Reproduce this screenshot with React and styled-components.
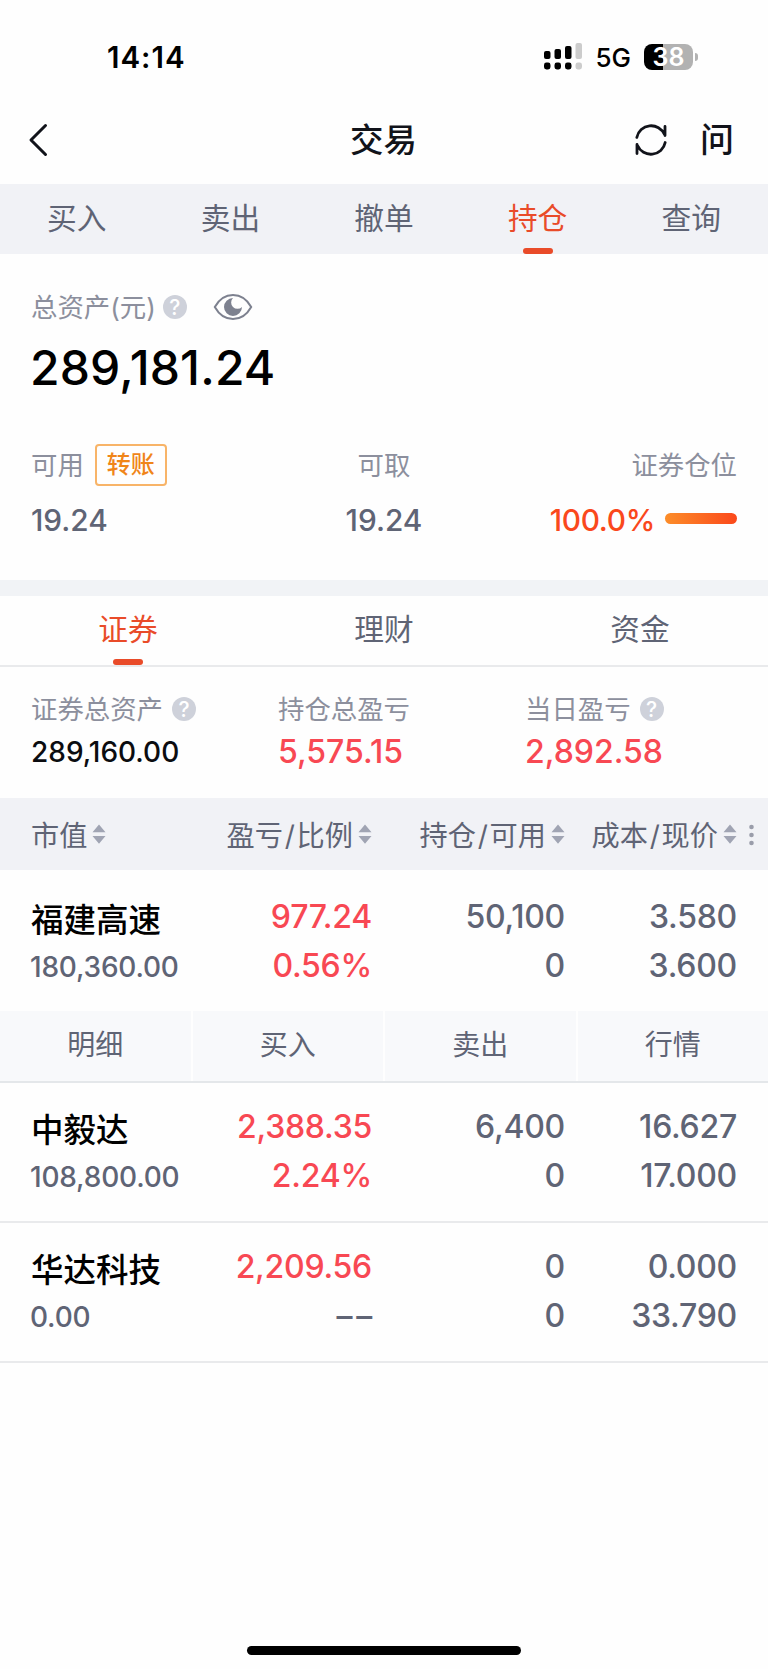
import React from "react";
import styled, { createGlobalStyle, css } from "styled-components";

const GlobalStyle = createGlobalStyle`
  * { box-sizing: border-box; }
  html, body { margin: 0; padding: 0; background: #fefefe; }
  body {
    font-family: Inter, "Noto Sans CJK SC", sans-serif;
    color: #5f6475;
    -webkit-font-smoothing: antialiased;
  }
`;

const Screen = styled.main`
  display: flex;
  flex-direction: column;
  width: 768px;
  height: 1669px;
  overflow: hidden;
  background: #fefefe;
`;

const StatusBar = styled.header`
  display: flex;
  justify-content: space-between;
  height: 95px;
  padding: 40px 70px 0 107px;
`;

const Clock = styled.span`
  height: 35px;
  font-size: 29.5px;
  font-weight: 600;
  line-height: 35px;
  letter-spacing: 1px;
  color: #000;
`;

const StatusIcons = styled.div`
  display: flex;
  align-items: center;
  height: 33px;
`;

const Network = styled.span`
  margin: 2px 13px 0 12px;
  font-size: 26px;
  font-weight: 450;
  line-height: 32px;
  color: #000;
`;

const Battery = styled.div`
  width: 49px;
  height: 26px;
  border-radius: 8px;
  background: linear-gradient(90deg, #000 0 19px, #b2b2b2 19px);
  color: #fff;
  font-size: 25px;
  font-weight: 600;
  line-height: 27px;
  text-align: center;
`;

const BatteryCap = styled.i`
  width: 3px;
  height: 8px;
  margin-left: 2px;
  border-radius: 0 3px 3px 0;
  background: #b2b2b2;
`;

const NavBar = styled.nav`
  display: grid;
  grid-template-columns: 1fr auto 1fr;
  align-items: center;
  height: 89px;
  padding: 0 34px 0 28px;
`;

const Title = styled.h1`
  margin: 0;
  padding-left: 5px;
  font-size: 33.5px;
  font-weight: 500;
  line-height: 40px;
  color: #11131a;
`;

const NavActions = styled.div`
  display: flex;
  align-items: center;
  justify-content: flex-end;
  gap: 33px;
`;

const AskButton = styled.span`
  font-size: 34px;
  font-weight: 500;
  line-height: 40px;
  color: #11131a;
`;

const TabBar = styled.div`
  display: grid;
  grid-template-columns: repeat(${(p) => p.$count}, 1fr);
  height: ${(p) => p.$height}px;
  background: ${(p) => (p.$tinted ? "#f1f2f6" : "#fefefe")};
  ${(p) => !p.$tinted && css`border-bottom: 2px solid #e9eaec;`}
`;

const Tab = styled.div`
  display: flex;
  flex-direction: column;
  align-items: center;
  justify-content: space-between;
  padding-top: ${(p) => p.$top}px;
  font-size: 29.7px;
  line-height: 44px;
  color: ${(p) => (p.$active ? "#e94b29" : "#5f6475")};

  &::after {
    content: "";
    width: 30px;
    height: 6px;
    border-radius: 3px;
    background: ${(p) => (p.$active ? "#e94b29" : "transparent")};
  }
`;

const Summary = styled.section`
  height: 326px;
  padding: 35px 31px 0;
`;

const LabelRow = styled.div`
  display: flex;
  align-items: center;
  height: 36px;
`;

const Label = styled.span`
  font-size: 26.4px;
  line-height: 36px;
  color: #8c8f9d;
  white-space: nowrap;
`;

const Help = styled.span`
  width: 24px;
  height: 24px;
  margin-left: ${(p) => p.$gap}px;
  border-radius: 50%;
  background: #ced1da;
  color: #fff;
  font-size: 21px;
  font-weight: 450;
  line-height: 25px;
  text-align: center;
`;

const EyeIcon = styled.svg`
  margin-left: 26px;
`;

const Total = styled.div`
  margin: 13px 0 0 -1px;
  font-size: 48px;
  font-weight: 500;
  line-height: 60px;
  letter-spacing: 0.15px;
  color: #000;
`;

const Balances = styled.div`
  display: grid;
  grid-template-columns: 1fr 1fr 1fr;
  margin-top: 40px;
`;

const Balance = styled.div`
  display: flex;
  flex-direction: column;
  align-items: ${(p) => p.$align};
`;

const BalanceHead = styled.div`
  display: flex;
  align-items: center;
  height: 64px;
  padding-bottom: 11px;
  gap: 11px;
`;

const TransferButton = styled.button`
  width: 72px;
  height: 42px;
  padding: 0;
  border: 2px solid #f8b468;
  border-radius: 4px;
  background: transparent;
  font: 500 24px/38px Inter, "Noto Sans CJK SC", sans-serif;
  color: #f08519;
`;

const BalanceValue = styled.div`
  display: flex;
  align-items: center;
  gap: 10px;
  font-size: 29.8px;
  font-weight: 450;
  line-height: 36px;
  letter-spacing: ${(p) => (p.$hot ? -0.3 : 0)}px;
  color: ${(p) => (p.$hot ? "#fa481c" : "#5f6475")};
`;

const Meter = styled.i`
  width: 72px;
  height: 11px;
  margin-bottom: 4px;
  border-radius: 6px;
  background: linear-gradient(90deg, #fc8d29, #fb481b);
`;

const Divider = styled.div`
  height: 16px;
  background: #f1f3f6;
`;

const Metrics = styled.section`
  display: grid;
  grid-template-columns: 247px 247px 1fr;
  height: 131px;
  padding: 24px 31px 0;
`;

const MetricValue = styled.div`
  margin-top: 6px;
  font-size: ${(p) => (p.$gain ? 32 : 28)}px;
  font-weight: ${(p) => (p.$gain ? 500 : 450)};
  line-height: 38px;
  color: ${(p) => (p.$gain ? "#f84853" : "#0b0c10")};
`;

const columns = css`
  display: grid;
  grid-template-columns: 150px 191px 193px 172px;
`;

const TableHead = styled.div`
  ${columns}
  position: relative;
  height: 72px;
  padding: 0 31px;
  background: #f1f2f6;
`;

const HeadCell = styled.div`
  display: flex;
  align-items: center;
  justify-content: ${(p) => (p.$first ? "flex-start" : "flex-end")};
  gap: 5px;
  padding-bottom: 1px;
  font-size: 28.2px;
  white-space: nowrap;
`;

const Slash = styled.span`
  margin: 0 1.8px;
`;

const MoreDots = styled.svg`
  position: absolute;
  top: 26px;
  right: 14px;
`;

const Row = styled.article`
  ${columns}
  height: ${(p) => p.$height}px;
  padding: ${(p) => p.$top}px 31px 0;
  ${(p) => p.$line && css`border-bottom: 2px solid #e9eaec;`}
`;

const Cell = styled.div`
  display: flex;
  flex-direction: column;
  align-items: flex-end;
  font-size: 32px;
  font-weight: 450;
  line-height: 49px;
  letter-spacing: -0.25px;
  white-space: nowrap;
  color: ${(p) => (p.$gain ? "#f84853" : "#5f6475")};
`;

const NameCell = styled.div`
  padding-top: 4px;
  white-space: nowrap;
`;

const StockName = styled.div`
  font-size: 32.5px;
  font-weight: 500;
  line-height: 49px;
  color: #000;
`;

const MarketValue = styled.div`
  margin-left: -1px;
  font-size: 28px;
  font-weight: 450;
  line-height: 45px;
  letter-spacing: -0.2px;
`;

const Flat = styled.span`
  display: flex;
  gap: 4px;
  color: #5f6475;
`;

const ActionBar = styled.div`
  display: grid;
  grid-template-columns: repeat(4, 1fr);
  gap: 2px;
  height: 72px;
  border-bottom: 2px solid #e4e7ea;
`;

const Action = styled.div`
  background: #f8f9fb;
  font-size: 28px;
  line-height: 68px;
  text-align: center;
`;

const HomeIndicator = styled.div`
  width: 274px;
  height: 9px;
  margin: auto auto 14px;
  border-radius: 5px;
  background: #000;
`;

const SortIcon = () => (
  <svg width="14" height="20" viewBox="0 0 14 20" fill="#a0a4b3">
    <path d="M7 0.5 13.5 8.3H0.5Z M7 19.8 13.5 12H0.5Z" />
  </svg>
);

const mainTabs = ["买入", "卖出", "撤单", "持仓", "查询"];
const assetTabs = ["证券", "理财", "资金"];
const headings = [["市值"], ["盈亏", "比例"], ["持仓", "可用"], ["成本", "现价"]];
const actions = ["明细", "买入", "卖出", "行情"];
const holdings = [
  { name: "福建高速", value: "180,360.00", gain: "977.24", rate: "0.56%", held: "50,100", free: "0", cost: "3.580", price: "3.600", open: true },
  { name: "中毅达", value: "108,800.00", gain: "2,388.35", rate: "2.24%", held: "6,400", free: "0", cost: "16.627", price: "17.000" },
  { name: "华达科技", value: "0.00", gain: "2,209.56", rate: null, held: "0", free: "0", cost: "0.000", price: "33.790" },
];

const Holding = ({ item }) => (
  <>
    <Row $height={item.open ? 141 : 140} $top={item.open ? 22 : 19} $line={!item.open}>
      <NameCell>
        <StockName>{item.name}</StockName>
        <MarketValue>{item.value}</MarketValue>
      </NameCell>
      <Cell $gain>
        <span>{item.gain}</span>
        {item.rate ? (
          <span>{item.rate}</span>
        ) : (
          <Flat>
            <span>–</span>
            <span>–</span>
          </Flat>
        )}
      </Cell>
      <Cell>
        <span>{item.held}</span>
        <span>{item.free}</span>
      </Cell>
      <Cell>
        <span>{item.cost}</span>
        <span>{item.price}</span>
      </Cell>
    </Row>
    {item.open && (
      <ActionBar>
        {actions.map((a) => (
          <Action key={a}>{a}</Action>
        ))}
      </ActionBar>
    )}
  </>
);

export default function App() {
  return (
    <Screen>
      <GlobalStyle />
      <StatusBar>
        <Clock>14:14</Clock>
        <StatusIcons>
          <svg width="39" height="27" viewBox="0 0 39 27">
            <rect x="0" y="8" width="6.5" height="8" rx="2" />
            <rect x="10.5" y="6" width="6.5" height="10" rx="2" />
            <rect x="21" y="3" width="6.5" height="13" rx="2" />
            <rect x="31.5" y="0" width="6.5" height="16" rx="2" fill="#ccc" />
            <rect x="0" y="19.5" width="6.5" height="7" rx="2.4" />
            <rect x="10.5" y="19.5" width="6.5" height="7" rx="2.4" />
            <rect x="21" y="19.5" width="6.5" height="7" rx="2.4" />
            <rect x="31.5" y="19.5" width="6.5" height="7" rx="2.4" fill="#ccc" />
          </svg>
          <Network>5G</Network>
          <Battery>38</Battery>
          <BatteryCap />
        </StatusIcons>
      </StatusBar>
      <NavBar>
        <svg width="22" height="34" viewBox="0 0 22 34" fill="none" stroke="#11131a" strokeWidth="3" strokeLinecap="round" strokeLinejoin="round">
          <path d="M17.5 2.5 3 17 17.5 31.5" />
        </svg>
        <Title>交易</Title>
        <NavActions>
          <svg width="32" height="34" viewBox="0 0 32 34" fill="none" stroke="#11131a" strokeWidth="2.8" strokeLinecap="round" strokeLinejoin="round">
            <path d="M1.8 14.5A14.6 14.6 0 0 1 29.5 11.5M30 3.5V12.5" />
            <path d="M30.2 19.5A14.6 14.6 0 0 1 2.5 22.5M2 30.5V21.5" />
          </svg>
          <AskButton>问</AskButton>
        </NavActions>
      </NavBar>
      <TabBar $count={5} $height={70} $tinted>
        {mainTabs.map((t) => (
          <Tab key={t} $top={12} $active={t === "持仓"}>{t}</Tab>
        ))}
      </TabBar>
      <Summary>
        <LabelRow>
          <Label>总资产(元)</Label>
          <Help $gap={7}>?</Help>
          <EyeIcon width="40" height="28" viewBox="0 0 40 28" fill="none">
            <path d="M1.8 14C6 6.5 12.5 2 20 2S34 6.5 38.2 14C34 21.5 27.5 26 20 26S6 21.5 1.8 14Z" stroke="#7d818f" strokeWidth="2" />
            <path d="M20 5A9 9 0 1 0 29 14A5.5 5.5 0 0 1 20 5Z" fill="#7d818f" />
          </EyeIcon>
        </LabelRow>
        <Total>289,181.24</Total>
        <Balances>
          <Balance $align="flex-start">
            <BalanceHead>
              <Label>可用</Label>
              <TransferButton>转账</TransferButton>
            </BalanceHead>
            <BalanceValue>19.24</BalanceValue>
          </Balance>
          <Balance $align="center">
            <BalanceHead>
              <Label>可取</Label>
            </BalanceHead>
            <BalanceValue>19.24</BalanceValue>
          </Balance>
          <Balance $align="flex-end">
            <BalanceHead>
              <Label>证券仓位</Label>
            </BalanceHead>
            <BalanceValue $hot>
              100.0%
              <Meter />
            </BalanceValue>
          </Balance>
        </Balances>
      </Summary>
      <Divider />
      <TabBar $count={3} $height={71}>
        {assetTabs.map((t) => (
          <Tab key={t} $top={11} $active={t === "证券"}>{t}</Tab>
        ))}
      </TabBar>
      <Metrics>
        <div>
          <LabelRow>
            <Label>证券总资产</Label>
            <Help $gap={9}>?</Help>
          </LabelRow>
          <MetricValue>289,160.00</MetricValue>
        </div>
        <div>
          <LabelRow>
            <Label>持仓总盈亏</Label>
          </LabelRow>
          <MetricValue $gain>5,575.15</MetricValue>
        </div>
        <div>
          <LabelRow>
            <Label>当日盈亏</Label>
            <Help $gap={9}>?</Help>
          </LabelRow>
          <MetricValue $gain>2,892.58</MetricValue>
        </div>
      </Metrics>
      <TableHead>
        {headings.map(([first, second]) => (
          <HeadCell key={first} $first={!second}>
            <span>
              {first}
              {second && <Slash>/</Slash>}
              {second}
            </span>
            <SortIcon />
          </HeadCell>
        ))}
        <MoreDots width="5" height="22" viewBox="0 0 5 22" fill="#9a9daa">
          <circle cx="2.5" cy="3" r="2.3" />
          <circle cx="2.5" cy="11" r="2.3" />
          <circle cx="2.5" cy="19" r="2.3" />
        </MoreDots>
      </TableHead>
      {holdings.map((h) => (
        <Holding key={h.name} item={h} />
      ))}
      <HomeIndicator />
    </Screen>
  );
}
